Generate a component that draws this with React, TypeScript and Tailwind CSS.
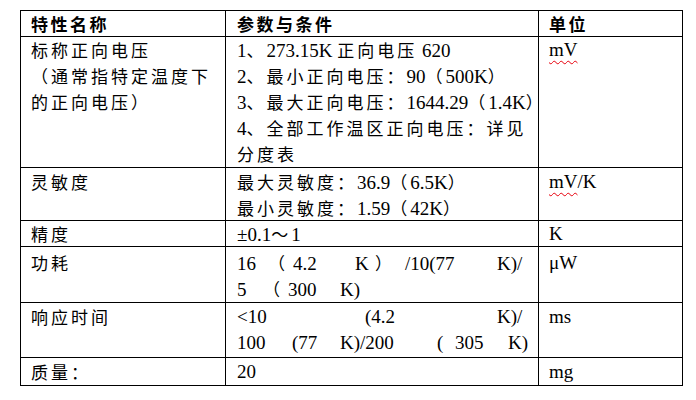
const CJK_RE = /([\u3000-\u9fff\uff00-\uffef]+)/;

function Txt({ s }: { s: string }) {
  const parts = s.split(CJK_RE).filter(Boolean);
  return (
    <>
      {parts.map((p, i) =>
        CJK_RE.test(p) ? (
          <span key={i} className="font-['Noto_Sans_CJK_SC',sans-serif] text-[17px] tracking-[3px]">
            {p}
          </span>
        ) : (
          <span key={i} className="font-['Liberation_Serif',serif] text-[19px] tracking-[0px] whitespace-pre">
            {p}
          </span>
        )
      )}
    </>
  );
}

function Line({ children }: { children: React.ReactNode }) {
  return <div className="h-[26px] leading-[26px] whitespace-nowrap text-black">{children}</div>;
}

function Tok({ w, s }: { w: string; s: string }) {
  return (
    <span className={"inline-block " + w}>
      <Txt s={s} />
    </span>
  );
}

function Row({
  h,
  pt,
  a,
  b,
  c,
}: {
  h: string;
  pt: string;
  a: React.ReactNode;
  b: React.ReactNode;
  c: React.ReactNode;
}) {
  return (
    <div className={"flex border-t border-black " + h}>
      <div className={"w-[205px] border-l border-black pl-[10px] " + pt}>{a}</div>
      <div className={"w-[313px] border-l border-black pl-[11px] " + pt}>{b}</div>
      <div className={"w-[145px] border-x border-black pl-[10px] " + pt}>{c}</div>
    </div>
  );
}

const wavy = "underline decoration-wavy decoration-red-600 decoration-1 underline-offset-[4px]";

function Head({ s }: { s: string }) {
  return (
    <div className="h-[25px] leading-[25px] font-['Noto_Sans_CJK_SC',sans-serif] font-bold text-[17px] tracking-[2.5px] text-black">
      {s}
    </div>
  );
}

export default function App() {
  return (
    <div className="w-[696px] h-[400px] bg-white pt-[10px] pl-[20px]">
      <div className="w-[663px] border-b border-black">
        <Row h="h-[26px]" pt="" a={<Head s="特性名称" />} b={<Head s="参数与条件" />} c={<Head s="单位" />} />

        <Row
          h="h-[131px]"
          pt=""
          a={
            <>
              <Line><Txt s="标称正向电压" /></Line>
              <Line><Txt s="（通常指特定温度下" /></Line>
              <Line><Txt s="的正向电压）" /></Line>
            </>
          }
          b={
            <>
              <Line><Txt s="1、273.15K 正向电压 620" /></Line>
              <Line><Txt s="2、最小正向电压：90（500K）" /></Line>
              <Line><Txt s="3、最大正向电压：1644.29（1.4K）" /></Line>
              <Line><Txt s="4、全部工作温区正向电压：详见" /></Line>
              <Line><Txt s="分度表" /></Line>
            </>
          }
          c={
            <Line>
              <span className={wavy}><Txt s="mV" /></span>
            </Line>
          }
        />

        <Row
          h="h-[53px]"
          pt="pt-[1px]"
          a={<Line><Txt s="灵敏度" /></Line>}
          b={
            <>
              <Line><Txt s="最大灵敏度：36.9（6.5K）" /></Line>
              <Line><Txt s="最小灵敏度：1.59（42K）" /></Line>
            </>
          }
          c={
            <Line>
              <span className={wavy}><Txt s="mV" /></span>
              <Txt s="/K" />
            </Line>
          }
        />

        <Row
          h="h-[26px]"
          pt=""
          a={<Line><Txt s="精度" /></Line>}
          b={<Line><Txt s="±0.1～1" /></Line>}
          c={<Line><Txt s="K" /></Line>}
        />

        <Row
          h="h-[56px]"
          pt="pt-[3px]"
          a={<Line><Txt s="功耗" /></Line>}
          b={
            <>
              <Line>
                <Tok w="w-[31px]" s="16" />
                <Tok w="w-[25px]" s="（" />
                <Tok w="w-[62px]" s="4.2" />
                <Tok w="w-[20px]" s="K" />
                <Tok w="w-[30px]" s="）" />
                <Tok w="w-[92px]" s="/10(77" />
                <Tok w="w-[30px]" s="K)/" />
              </Line>
              <Line>
                <Tok w="w-[26px]" s="5" />
                <Tok w="w-[25px]" s="（" />
                <Tok w="w-[52px]" s="300" />
                <Tok w="w-[30px]" s="K)" />
              </Line>
            </>
          }
          c={<Line><Txt s="μW" /></Line>}
        />

        <Row
          h="h-[55px]"
          pt="pt-[1px]"
          a={<Line><Txt s="响应时间" /></Line>}
          b={
            <>
              <Line>
                <Tok w="w-[128px]" s="<10" />
                <Tok w="w-[132px]" s="(4.2" />
                <Tok w="w-[30px]" s="K)/" />
              </Line>
              <Line>
                <Tok w="w-[55px]" s="100" />
                <Tok w="w-[48px]" s="(77" />
                <Tok w="w-[97px]" s="K)/200" />
                <Tok w="w-[18px]" s="(" />
                <Tok w="w-[53px]" s="305" />
                <Tok w="w-[20px]" s="K)" />
              </Line>
            </>
          }
          c={<Line><Txt s="ms" /></Line>}
        />

        <Row
          h="h-[28px]"
          pt="pt-[1px]"
          a={<Line><Txt s="质量：" /></Line>}
          b={<Line><Txt s="20" /></Line>}
          c={<Line><Txt s="mg" /></Line>}
        />
      </div>
    </div>
  );
}
